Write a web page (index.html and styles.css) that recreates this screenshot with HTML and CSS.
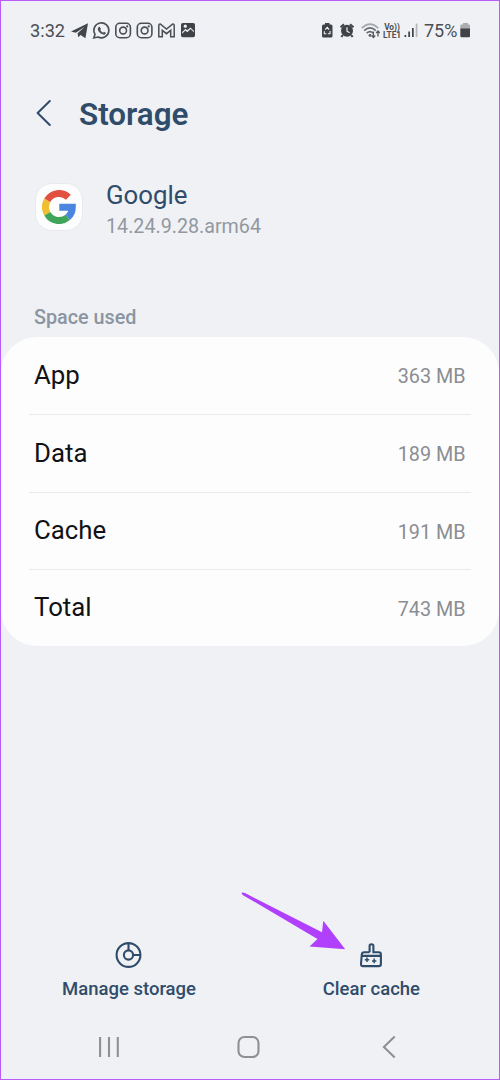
FILE: index.html
```html
<!DOCTYPE html>
<html lang="en">
<head>
<meta charset="utf-8">
<title>Storage</title>
<link rel="stylesheet" href="styles.css">
</head>
<body>
<div class="screen">
  <header class="status">
    <span class="clock">3:32</span>
    <svg class="notifications" width="128" height="20" viewBox="70 20 128 20">
      <path fill="#43464b" d="M71 31.5 88 23.2 85.4 38.2 80.6 35 78.2 37.3 77.6 33.2 84.5 27 75.8 32.8Z"/>
      <g fill="none" stroke="#4b4e53" stroke-width="1.6">
        <path d="M93.8 38 95 34.3A7.5 7.5 0 1 1 97.9 37Z"/>
        <rect x="115.8" y="23.3" width="14.6" height="14.4" rx="4"/>
        <circle cx="123.1" cy="30.5" r="3.4"/>
        <rect x="137.3" y="23.3" width="14.6" height="14.4" rx="4"/>
        <circle cx="144.6" cy="30.5" r="3.4"/>
        <path stroke-width="1.5" d="M158.8 36.8V25.4Q158.8 23.8 160.5 24.1L166.5 29 172.5 24.1Q174.2 23.8 174.2 25.4V36.8H170.7V30.4L166.5 33.7 162.3 30.4V36.8Z"/>
      </g>
      <path fill="#4b4e53" d="M98.4 27.2 99.7 26.8 101 29.1 100.2 30.1Q101.2 32 103 32.7L104 31.8 106 33Q105.4 35 103.4 34.6 98.6 33.1 97.7 29.2Z"/>
      <circle cx="127.2" cy="26.4" r="1.1" fill="#4b4e53"/>
      <circle cx="148.7" cy="26.4" r="1.1" fill="#4b4e53"/>
      <rect x="181" y="23" width="14" height="14.3" rx="1.8" fill="#3f4247"/>
      <path fill="#eff1f5" d="M182.2 33.7 185.4 30.6 187.3 32.2 190.5 29 194 32.2V31L190.4 27.4 187.2 30.2 185.6 28.8 182.2 32Z"/>
      <circle cx="185.3" cy="26.2" r="1.6" fill="#eff1f5"/>
    </svg>
    <span class="grow"></span>
    <svg class="signals" width="60" height="20" viewBox="320 20 60 20">
      <path fill="#3f4247" d="M325 23H329.5V24.4H331Q332.5 24.4 332.5 26V36Q332.5 37.6 331 37.6H323.5Q322 37.6 322 36V26Q322 24.4 323.5 24.4H325Z"/>
      <path fill="none" stroke="#eff1f5" stroke-width="1.1" d="M325.2 29.6 327.2 27.3 329.2 29.6M330.1 31 330 33.8H327.9M326.4 33.8H324.3V31.2"/>
      <circle cx="347" cy="30.8" r="6" fill="#3f4247"/>
      <path fill="none" stroke="#3f4247" stroke-width="2" d="M340.5 27.2 344 24.2M353.5 27.2 350 24.2M342.8 35 341.4 37M351.2 35 352.6 37"/>
      <path fill="none" stroke="#eff1f5" stroke-width="1.2" d="M347 27.3V31.2L349.6 32.8"/>
      <g fill="none" stroke-width="1.7">
        <path stroke="#a5a8ad" d="M361.7 28.2Q370 20.2 378.3 28.2"/>
        <path stroke="#66696e" d="M364.2 30.6Q370 25.2 375.8 30.6M366.7 33.2Q370 30 373.2 33.2"/>
        <path stroke="#55585d" stroke-width="1.3" d="M373.4 31.6V37.4M371.6 35.5 373.4 37.5 375.2 35.5M378 36.5V31M376.2 33 378 31 379.8 33"/>
      </g>
      <circle cx="370" cy="35.4" r="1.4" fill="#55585d"/>
    </svg>
    <span class="volte"><span>Vo))</span><span>LTE1</span></span>
    <svg class="bars" width="16" height="20" viewBox="403 20 16 20">
      <path fill="#3f4247" d="M404.5 35H406.2V37H404.5ZM408.3 31.5H410V37H408.3ZM412 28H413.7V37H412Z"/>
      <path fill="#b4b6bb" d="M415.7 23.6H417.4V37H415.7Z"/>
    </svg>
    <span class="percent">75%</span>
    <svg class="battery" width="11" height="20" viewBox="460 20 11 20">
      <path fill="#aaacb1" d="M463 23H468V24.4H469Q470 24.4 470 25.5V29H460.3V25.5Q460.3 24.4 461.3 24.4H463Z"/>
      <path fill="#3f4247" d="M460.3 28.5H470V36Q470 37.3 468.7 37.3H461.6Q460.3 37.3 460.3 36Z"/>
    </svg>
  </header>

  <div class="titlebar">
    <svg class="back" width="18" height="30" viewBox="0 0 18 30"><path d="M14.8 2 2.6 14 14.8 26"/></svg>
    <h1>Storage</h1>
  </div>

  <section class="app">
    <div class="appicon">
      <svg class="glogo" width="34" height="34" viewBox="0 0 34 34">
        <path stroke="#efbf32" d="M5.3 10.3A13.5 13.5 0 0 0 5.3 23.7"/>
        <path stroke="#e2503f" d="M5.3 10.3A13.5 13.5 0 0 1 26.4 7.3"/>
        <path stroke="#40a55a" d="M5.3 23.7A13.5 13.5 0 0 0 25.7 27.4"/>
        <path stroke="#4a86e0" d="M25.7 27.4A13.5 13.5 0 0 0 30.3 17.2H17.3"/>
      </svg>
    </div>
    <div class="appinfo">
      <div class="name">Google</div>
      <div class="version">14.24.9.28.arm64</div>
    </div>
  </section>

  <h2>Space used</h2>
  <dl class="card">
    <div class="row"><dt>App</dt><dd>363 MB</dd></div>
    <div class="row"><dt>Data</dt><dd>189 MB</dd></div>
    <div class="row"><dt>Cache</dt><dd>191 MB</dd></div>
    <div class="row"><dt>Total</dt><dd>743 MB</dd></div>
  </dl>

  <footer class="actions">
    <div class="action manage">
      <svg width="28" height="28" viewBox="0 0 28 28"><circle cx="13.5" cy="14" r="11.9"/><circle cx="13.5" cy="14" r="4.6"/><path d="M13.5 2V9.4M18.1 14H25.5"/></svg>
      <span>Manage storage</span>
    </div>
    <div class="action clear">
      <svg width="28" height="28" viewBox="0 0 28 28"><path d="M12.6 11.2V4.9Q12.6 3.2 14.5 3.2 16.4 3.2 16.4 4.9V11.2H21.7Q23.9 11.2 23.9 13.4V22.9Q23.9 25.1 21.7 25.1H6Q3.8 25.1 4 22.9L4.8 13.4Q5 11.2 7.2 11.2H12.6M4.8 14.9H23.9"/><path class="spark" d="M10 16.5V21.1M7.8 18.8H12.2M17.2 17.6V22.2M15 19.9H19.4"/></svg>
      <span>Clear cache</span>
    </div>
  </footer>

  <nav class="nav">
    <svg width="24" height="24" viewBox="0 0 24 24"><path d="M3.1 2V22M12 2V22M20.8 2V22"/></svg>
    <svg width="24" height="24" viewBox="0 0 24 24"><rect x="1.5" y="2" width="20" height="20" rx="6"/></svg>
    <svg width="16" height="24" viewBox="0 0 16 24"><path d="M13.7 1.4 2.9 12 13.7 22.6"/></svg>
  </nav>

  <svg class="arrow" width="106" height="59" viewBox="0 0 106 59"><path d="M.8 .8Q2 0 4 1.1L81 40.2 82.3 28.7 104.2 57.2 68.5 54.5 76.5 46.9 2.5 3.4Q.5 2.2 .8 .8Z"/></svg>
</div>
</body>
</html>
```

FILE: styles.css
```css
* { box-sizing: border-box; }

body {
  margin: 0;
  font-family: Roboto, "Liberation Sans", sans-serif;
  background: #eff1f5;
}

svg { display: block; flex: none; }

.screen {
  position: relative;
  display: flex;
  flex-direction: column;
  width: 500px;
  height: 1080px;
  border: 1px solid #b95cfb;
  background: #eff1f5;
  overflow: hidden;
}

.status {
  display: flex;
  align-items: center;
  height: 58px;
  padding: 0 28px 0 29px;
  color: #4b4e53;
  font-size: 19px;
  line-height: 22px;
  white-space: nowrap;
}
.clock { width: 40px; padding-top: 1px; font-size: 18.2px; }
.grow { flex: 1; }
.volte {
  display: flex;
  flex-direction: column;
  align-items: center;
  width: 22px;
  margin: 1px 0 0 1px;
  font-size: 8.3px;
  font-weight: 700;
  line-height: 8px;
}
.percent { width: 36px; margin-left: 5px; padding-top: 1px; font-size: 18px; }

.titlebar {
  display: flex;
  align-items: center;
  height: 110px;
  padding-left: 34px;
  color: #304c6b;
}
.back {
  fill: none;
  stroke: #304c6b;
  stroke-width: 2;
  stroke-linecap: round;
  stroke-linejoin: round;
}
h1 {
  margin: 2px 0 0 26px;
  font-size: 31.4px;
  font-weight: 600;
  line-height: 38px;
}

.app {
  display: flex;
  height: 134px;
  padding: 11px 0 0 34px;
}
.appicon {
  display: grid;
  place-items: center;
  width: 48px;
  height: 48px;
  margin-top: 3px;
  border: 1px solid #e9eaee;
  border-radius: 17px;
  background: #fdfdfe;
}
.glogo { fill: none; stroke-width: 7; }
.appinfo { margin-left: 23px; }
.name {
  color: #304c6b;
  font-size: 25.8px;
  line-height: 30px;
}
.version {
  margin-top: 2px;
  color: #92989f;
  font-size: 19.7px;
  line-height: 30px;
}

h2 {
  height: 34px;
  margin: 0;
  padding-left: 33px;
  color: #8b95a1;
  font-size: 19.8px;
  font-weight: 500;
  line-height: 30px;
}

.card {
  margin: 0;
  padding: 0 28px;
  height: 309px;
  border-radius: 36px;
  background: #fdfdfe;
}
.row {
  display: flex;
  align-items: center;
  justify-content: space-between;
  height: 77.4px;
  padding: 0 5.5px 2px 5px;
}
.row + .row { border-top: 1.5px solid #e9eaec; }
dt { color: #111216; font-size: 25.8px; line-height: 30px; }
dd { margin: 5.5px 0 0; color: #8b8d92; font-size: 19.8px; line-height: 24px; }

.actions {
  display: flex;
  justify-content: space-between;
  margin-top: auto;
  padding: 0 79px 0 61px;
  height: 72px;
}
.action {
  display: flex;
  flex-direction: column;
  align-items: center;
  gap: 8px;
  color: #304c6b;
  font-size: 18.5px;
  font-weight: 500;
  line-height: 24px;
  white-space: nowrap;
}
.action svg {
  fill: none;
  stroke: #304c6b;
  stroke-width: 2.1;
}
.action .spark { stroke-width: 1.5; }

.nav {
  display: grid;
  grid-template-columns: 140px 140px auto;
  align-items: center;
  height: 66px;
  padding: 2px 0 0 96px;
}
.nav svg {
  fill: none;
  stroke: #8e9094;
  stroke-width: 2.1;
}
.nav svg:last-child { margin-left: 4px; }

/* Pointer lying over the page, aimed at the Clear cache action */
.arrow {
  position: absolute;
  left: 240px;
  top: 891px;
  fill: #b040fb;
}
```
